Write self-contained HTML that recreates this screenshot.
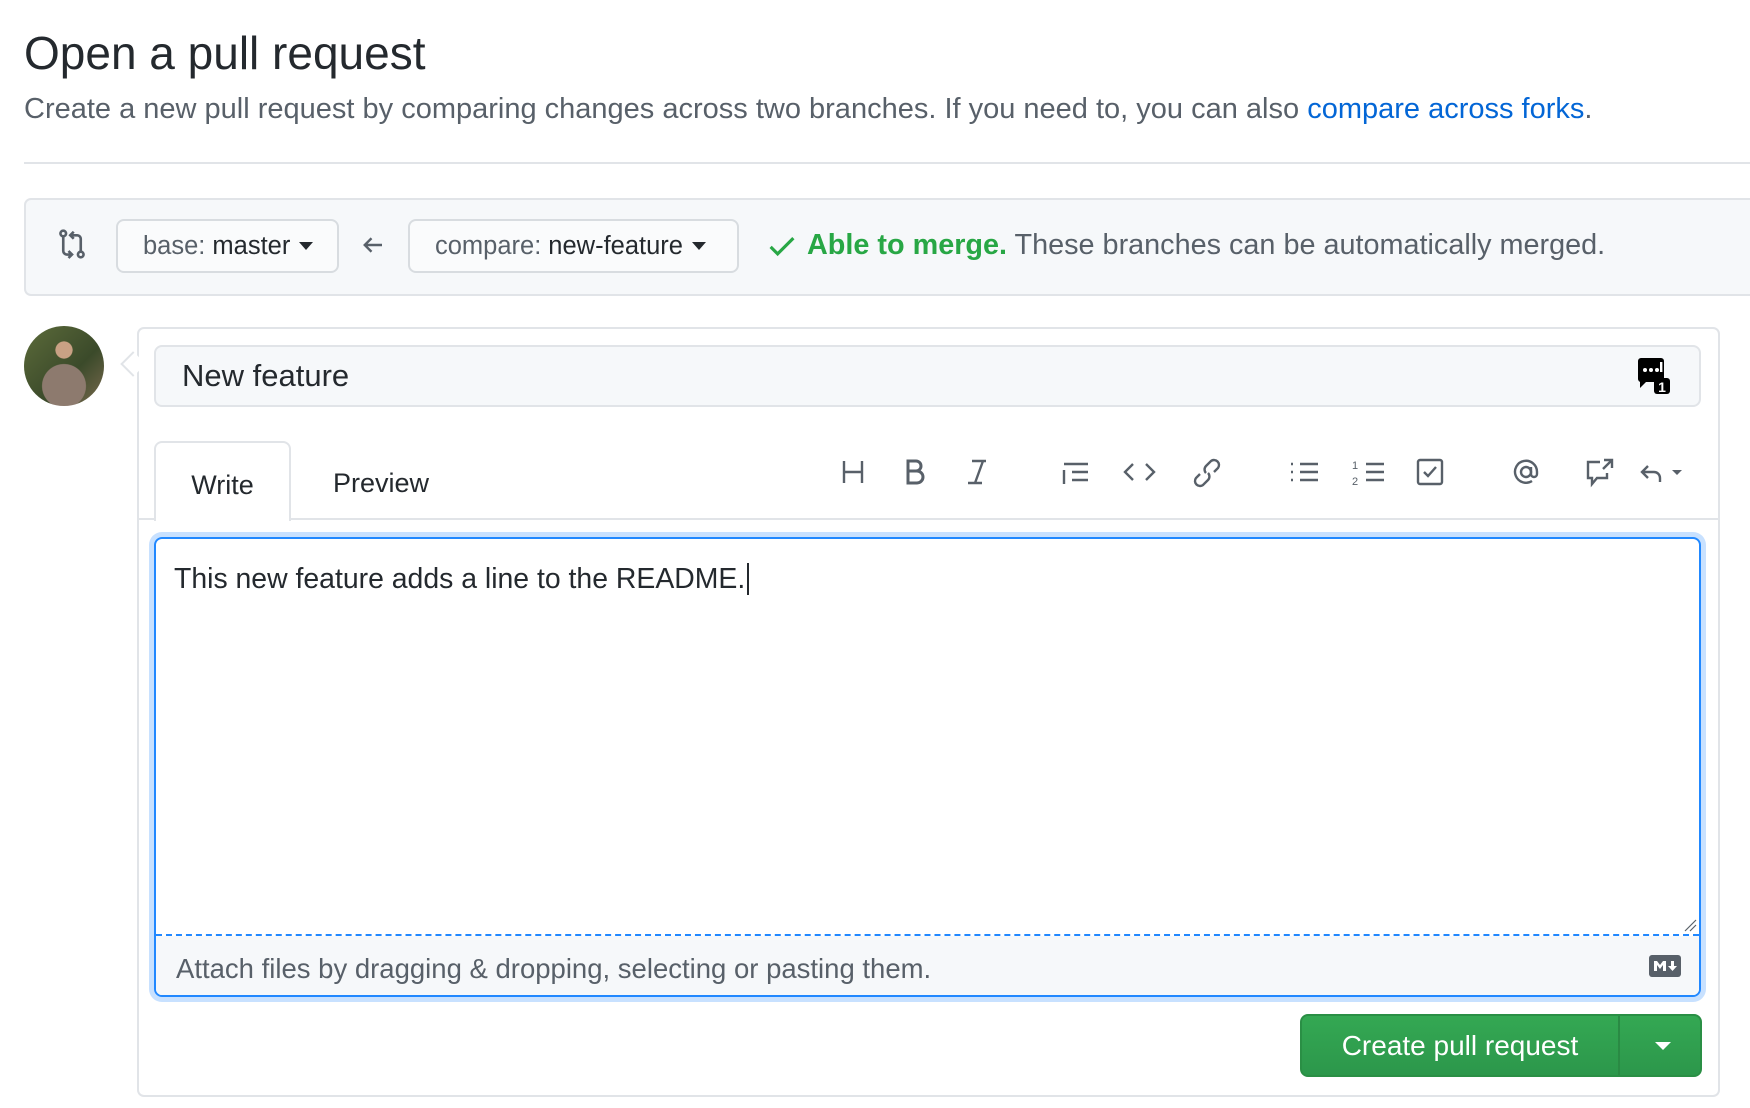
<!DOCTYPE html>
<html><head><meta charset="utf-8"><style>
*{box-sizing:border-box;margin:0;padding:0}
body{width:1750px;height:1108px;background:#fff;font-family:"Liberation Sans",Helvetica,Arial,sans-serif;color:#24292e;position:relative;overflow:hidden}
.a{position:absolute}
h1{position:absolute;left:24px;top:26px;font-size:46px;font-weight:400;color:#24292e}
.sub{left:24px;top:93px;font-size:29px;color:#586069;white-space:nowrap}
.sub span{color:#0366d6}
.hr{left:24px;top:162px;width:1726px;height:2px;background:#e1e4e8}
.bar{left:24px;top:198px;width:1760px;height:98px;background:#f6f8fa;border:2px solid #e1e4e8;border-radius:7px}
.btn{background:#fafbfc;border:2px solid #d8dce0;border-radius:8px;font-size:25.5px;color:#586069;display:flex;align-items:center;padding-left:25px;white-space:nowrap}
.btn b{color:#24292e;font-weight:400;margin-left:7px}
.caret{display:inline-block;width:0;height:0;border-left:7px solid transparent;border-right:7px solid transparent;border-top:8px solid #24292e;margin-left:9px}
.merge{left:807px;top:229px;font-size:28.8px;color:#586069;white-space:nowrap}
.merge b{color:#28a745}
.form{left:137px;top:327px;width:1583px;height:770px;border:2px solid #e1e4e8;border-radius:7px}
.title{left:154px;top:345px;width:1547px;height:62px;background:#f6f8fa;border:2px solid #e1e4e8;border-radius:8px;font-size:31px;padding-left:26px;line-height:58px}
.tabline{left:137px;top:518px;width:1583px;height:2px;background:#e1e4e8}
.tab{left:154px;top:441px;width:137px;height:80px;background:#fff;border:2px solid #e1e4e8;border-bottom:none;border-radius:8px 8px 0 0;font-size:27px;text-align:center;line-height:84px}
.prev{left:333px;top:468px;font-size:27px}
.ta{left:154px;top:537px;width:1547px;height:460px;border:2px solid #2188ff;border-radius:8px;box-shadow:0 0 0 5px #c8e1ff;overflow:hidden}
.ta .t{position:absolute;left:18px;top:24px;font-size:28.4px;color:#24292e;white-space:nowrap}
.ta .dash{position:absolute;left:0;top:395px;width:100%;border-top:2px dashed #2188ff}
.ta .foot{position:absolute;left:0;top:397px;width:100%;height:65px;background:#f6f8fa;font-size:27.5px;color:#586069;padding:17px 0 0 20px;white-space:nowrap}
.green{left:1300px;top:1014px;width:402px;height:63px;background:linear-gradient(#34a853,#2c974b);border:2px solid #2a8f45;border-radius:8px;color:#fff;font-size:28px}
</style></head><body>
<h1>Open a pull request</h1>
<div class="a sub">Create a new pull request by comparing changes across two branches. If you need to, you can also <span>compare across forks</span>.</div>
<div class="a hr"></div>
<div class="a bar"></div>
<svg class="a" style="left:58px;top:228px" width="28" height="32" viewBox="0 0 16 18" fill="none" stroke="#586069" stroke-width="1.5"><circle cx="3" cy="3" r="1.6"/><path d="M3 5v8"/><circle cx="13" cy="15" r="1.6"/><path d="M13 13V6c0-1-1-2-2-2H7M9 2L7 4l2 2"/><path d="M3 13c0 1 1 2 2 2h3M6 13l2 2-2 2"/></svg>
<div class="a btn" style="left:116px;top:219px;width:223px;height:54px">base: <b>master</b><span class="caret"></span></div>
<svg class="a" style="left:361px;top:233px" width="24" height="24" viewBox="0 0 16 16" fill="none" stroke="#586069" stroke-width="1.6"><path d="M14 8H3M7 3.5L2.5 8 7 12.5"/></svg>
<div class="a btn" style="left:408px;top:219px;width:331px;height:54px">compare: <b>new-feature</b><span class="caret"></span></div>
<svg class="a" style="left:768px;top:233px" width="28" height="26" viewBox="0 0 16 14" fill="none" stroke="#28a745" stroke-width="1.8"><path d="M1.5 7.5l4 4L14.5 2.5"/></svg>
<div class="a merge"><b>Able to merge.</b> These branches can be automatically merged.</div>
<div class="a" style="left:24px;top:326px;width:80px;height:80px;border-radius:50%;background:radial-gradient(circle at 50% 30%,#c9a184 0 12%,transparent 13%),radial-gradient(circle at 50% 75%,#8d7a6e 0 30%,transparent 31%),linear-gradient(135deg,#5c6b3a,#3b4a2a 60%,#7a6a4f)"></div>
<div class="a form"></div>
<div class="a" style="left:124px;top:355px;width:18px;height:18px;background:#fff;border-left:2px solid #e1e4e8;border-bottom:2px solid #e1e4e8;transform:rotate(45deg)"></div>
<div class="a title">New feature</div>
<svg class="a" style="left:1638px;top:358px" width="32" height="36" viewBox="0 0 16 18"><rect x="0" y="0" width="13" height="12" rx="1.5" fill="#000"/><path d="M1 11v4l3-3z" fill="#000"/><circle cx="3.5" cy="6" r="1" fill="#fff"/><circle cx="6.5" cy="6" r="1" fill="#fff"/><circle cx="9.5" cy="6" r="1" fill="#fff"/><rect x="11" y="2" width="1.2" height="5" fill="#fff"/><rect x="8" y="10" width="8" height="8" rx="1.5" fill="#000"/><text x="12" y="17" font-size="7" font-weight="bold" fill="#fff" text-anchor="middle" font-family="Liberation Sans">1</text></svg>
<div class="a tabline"></div>
<div class="a tab">Write</div>
<div class="a prev">Preview</div>
<svg class="a" style="left:840px;top:456px" width="870" height="34" viewBox="0 0 870 34" fill="none" stroke="#586069" stroke-width="2.4">
<path d="M4 5v22M22 5v22M4 16h18"/>
<path d="M68 5h8a5 5 0 0 1 0 10h-8zM68 15h9a6 6 0 0 1 0 12h-9zM68 5v22" stroke-width="3"/>
<path d="M132 5h14M128 27h14M143 5l-8 22"/>
<path d="M224 8h24M232 16h16M232 24h16M224 14v14" />
<path d="M293 8l-8 8 8 8M306 8l8 8-8 8"/>
<path d="M360 18l-4 4a5 5 0 0 0 7 7l5-5a5 5 0 0 0 0-7M374 16l4-4a5 5 0 0 0-7-7l-5 5a5 5 0 0 0 0 7"/>
<path d="M460 8h18M460 16h18M460 24h18M451 8h2M451 16h2M451 24h2"/>
<path d="M526 8h18M526 16h18M526 24h18"/>
<text x="512" y="13" font-size="11" fill="#586069" stroke="none" font-family="Liberation Sans">1</text><text x="512" y="29" font-size="11" fill="#586069" stroke="none" font-family="Liberation Sans">2</text>
<rect x="578" y="4" width="24" height="24" rx="2"/><path d="M584 16l4 4 8-9"/>
<circle cx="686" cy="16" r="5"/><path d="M691 11v7a3 3 0 0 0 6 0v-2a11 11 0 1 0-5 9"/>
<path d="M760 6h-12v16h4v6l5-6h10v-5M764 4h8v8M772 4l-9 9"/>
<path d="M808 10l-6 6 6 6M802 16h12a6 6 0 0 1 6 6v4"/>
<path d="M832 14l5 5 5-5z" fill="#586069" stroke="none"/>
</svg>
<div class="a ta"><div class="t">This new feature adds a line to the README.<span style="border-left:2px solid #24292e;margin-left:2px"></span></div><div class="dash"></div><div class="foot">Attach files by dragging &amp; dropping, selecting or pasting them.</div>
<svg style="position:absolute;left:1527px;top:379px" width="14" height="14" viewBox="0 0 14 14" stroke="#586069" stroke-width="1.2"><path d="M2 13L13 2M7 13L13 7"/></svg>
<svg style="position:absolute;left:1493px;top:416px" width="32" height="22" viewBox="0 0 32 22"><rect width="32" height="22" rx="3" fill="#586069"/><path d="M5 16V6h3l3 4 3-4h3v10h-3v-6l-3 4-3-4v6zM22 6h3v5h3l-4.5 5-4.5-5h3z" fill="#fff"/></svg>
</div>
<div class="a green"><div style="position:absolute;left:0;top:0;width:316px;height:59px;line-height:59px;text-align:center">Create pull request</div><div style="position:absolute;left:316px;top:0;width:2px;height:59px;background:#2a8a44"></div><div style="position:absolute;left:353px;top:26px;width:0;height:0;border-left:8px solid transparent;border-right:8px solid transparent;border-top:8px solid #fff"></div></div>
</body></html>
